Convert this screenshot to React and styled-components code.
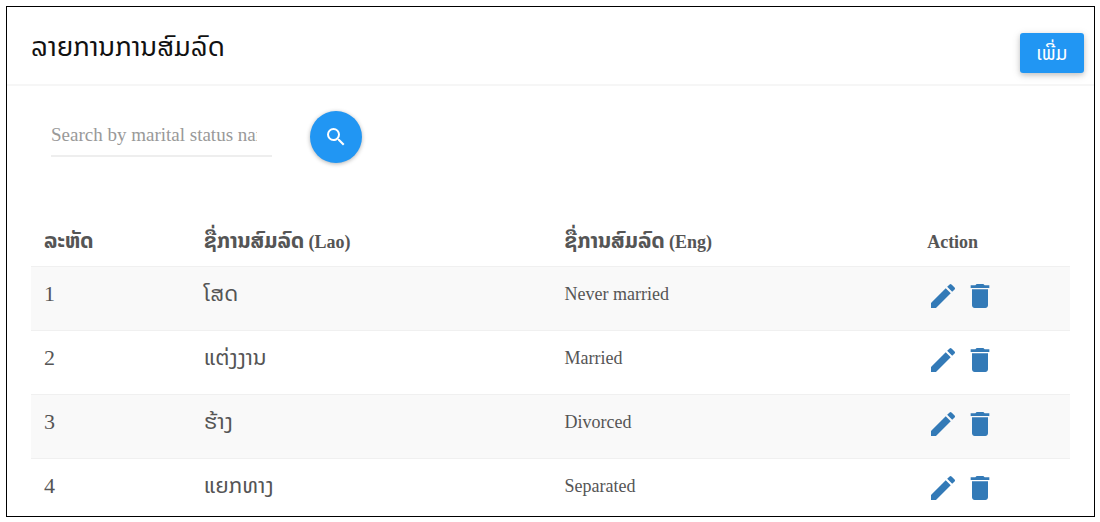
import React from "react";
import styled, { createGlobalStyle } from "styled-components";
import { MdSearch, MdEdit, MdDelete } from "react-icons/md";

const GlobalStyle = createGlobalStyle`
  *, *::before, *::after { box-sizing: border-box; }
  body {
    margin: 0;
    padding: 6px 5px 5px 6px;
    background: #fff;
    color: #555;
    font-family: "Liberation Serif", "Noto Sans Lao", "DejaVu Sans", serif;
    font-size: 18px;
    line-height: 24px;
  }
`;

const Card = styled.main`
  border: 1px solid #000;
  background: #fff;
`;

const Header = styled.header`
  display: flex;
  justify-content: space-between;
  align-items: flex-start;
  padding: 26px 10px 11px 24px;
  border-bottom: 2px solid #f6f6f6;
`;

const Title = styled.h1`
  margin: 0;
  color: #111;
  font-size: 27px;
  font-weight: 400;
  line-height: 28px;
`;

const AddButton = styled.button`
  min-width: 64px;
  height: 40px;
  padding: 2px 16px 0;
  border: 0;
  border-radius: 3px;
  background: #2196f3;
  color: #fff;
  font-family: inherit;
  font-size: 19px;
  line-height: 24px;
  box-shadow: 0 2px 5px rgba(0, 0, 0, 0.16), 0 2px 10px rgba(0, 0, 0, 0.12);
  cursor: pointer;
`;

const SearchForm = styled.form`
  display: flex;
  align-items: center;
  gap: 38px;
  padding: 25px 24px 0 44px;
`;

const SearchInput = styled.input`
  width: 221px;
  height: 40px;
  padding: 0 15px 2px 0;
  border: 0;
  border-bottom: 2px solid #eee;
  outline: none;
  background: transparent;
  color: #555;
  font-family: inherit;
  font-size: 19px;

  &::placeholder { color: #999; opacity: 1; }
`;

const SearchButton = styled.button`
  display: flex;
  align-items: center;
  justify-content: center;
  width: 52px;
  height: 52px;
  padding: 0;
  border: 0;
  border-radius: 50%;
  background: #2196f3;
  color: #fff;
  font-size: 24px;
  box-shadow: 0 1px 4px rgba(0, 0, 0, 0.3);
  cursor: pointer;
`;

const TableArea = styled.div`
  padding: 54px 24px 0;
`;

const Table = styled.table`
  width: 100%;
  border-collapse: separate;
  border-spacing: 0;
  table-layout: fixed;
`;

const HeadCell = styled.th`
  width: ${({ $width }) => $width};
  padding: 13px 13px 12px;
  text-align: left;
  vertical-align: baseline;
  font-size: 18px;
  font-weight: 700;
`;

const Lao = styled.span`
  font-size: 21px;
  line-height: 20px;
`;

const Row = styled.tr`
  &:nth-child(odd) { background: #f9f9f9; }
  &:last-child td { padding-bottom: 12px; }
`;

const Cell = styled.td`
  padding: ${({ $actions }) => ($actions ? "13px 13px 18px" : "15px 13px 18px")};
  border-top: 1px solid #f0f0f0;
  vertical-align: top;
  font-size: ${({ $large }) => ($large ? "22px" : "18px")};
`;

const Actions = styled.div`
  display: flex;
  gap: 5px;
`;

const IconButton = styled.button`
  display: flex;
  padding: 0;
  border: 0;
  background: none;
  color: #337ab7;
  font-size: 32px;
  cursor: pointer;
`;

const statuses = [
  { code: 1, lao: "ໂສດ", eng: "Never married" },
  { code: 2, lao: "ແຕ່ງງານ", eng: "Married" },
  { code: 3, lao: "ຮ້າງ", eng: "Divorced" },
  { code: 4, lao: "ແຍກທາງ", eng: "Separated" },
];

export default function App() {
  return (
    <>
      <GlobalStyle />
      <Card>
        <Header>
          <Title>ລາຍການການສົມລົດ</Title>
          <AddButton type="button">ເພີ່ມ</AddButton>
        </Header>
        <SearchForm onSubmit={(event) => event.preventDefault()}>
          <SearchInput
            type="text"
            aria-label="Search by marital status name"
            placeholder="Search by marital status name"
          />
          <SearchButton type="submit" aria-label="Search">
            <MdSearch />
          </SearchButton>
        </SearchForm>
        <TableArea>
          <Table>
            <thead>
              <tr>
                <HeadCell scope="col" $width="15.4%"><Lao>ລະຫັດ</Lao></HeadCell>
                <HeadCell scope="col" $width="34.7%"><Lao>ຊື່ການສົມລົດ</Lao> (Lao)</HeadCell>
                <HeadCell scope="col" $width="34.9%"><Lao>ຊື່ການສົມລົດ</Lao> (Eng)</HeadCell>
                <HeadCell scope="col" $width="15%">Action</HeadCell>
              </tr>
            </thead>
            <tbody>
              {statuses.map(({ code, lao, eng }) => (
                <Row key={code}>
                  <Cell $large>{code}</Cell>
                  <Cell $large>{lao}</Cell>
                  <Cell>{eng}</Cell>
                  <Cell $actions>
                    <Actions>
                      <IconButton type="button" aria-label={`Edit ${eng}`}>
                        <MdEdit />
                      </IconButton>
                      <IconButton type="button" aria-label={`Delete ${eng}`}>
                        <MdDelete />
                      </IconButton>
                    </Actions>
                  </Cell>
                </Row>
              ))}
            </tbody>
          </Table>
        </TableArea>
      </Card>
    </>
  );
}
